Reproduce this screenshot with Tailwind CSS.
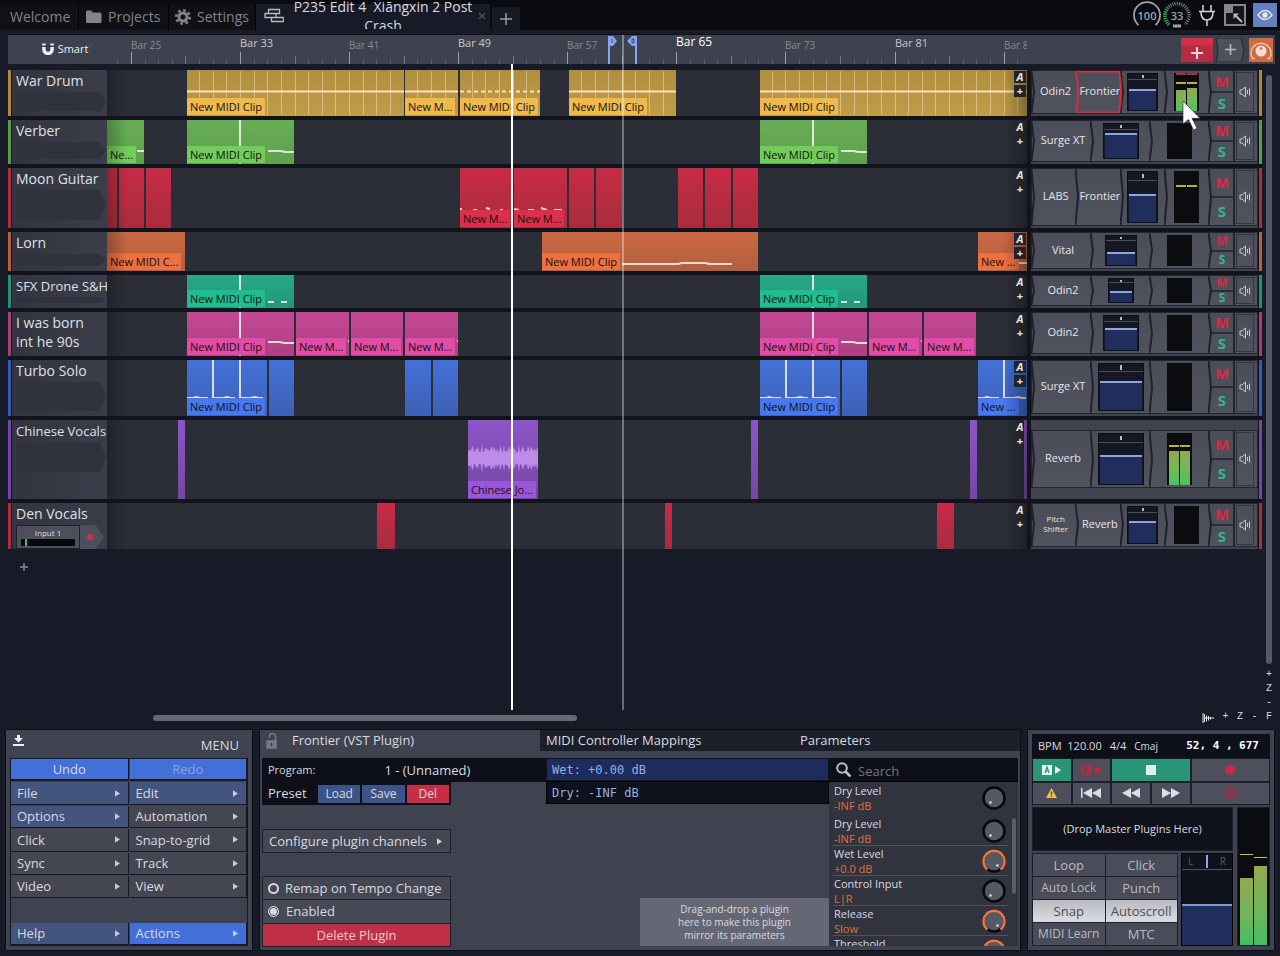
<!DOCTYPE html>
<html lang="en">
  <head>
    <meta charset="UTF-8" />
    <meta name="viewport" content="width=device-width, initial-scale=1.0" />
    <title>P235 Edit 4</title>
    <script src="https://cdn.jsdelivr.net/npm/@tailwindcss/browser@4"></script>
  </head>
  <body class="flex min-h-screen flex-col overflow-x-hidden bg-[#171b27] font-['Open_Sans','Noto_Sans',sans-serif] text-sm text-[#d9dae0]">
    <!-- tab bar -->
    <header class="flex h-[30px] items-stretch bg-[#090b11]">
      <nav class="flex items-stretch pt-1 text-[#82848a]">
        <a href="#" class="flex w-[79px] items-center border-r border-black bg-[#0f1117] pb-px pl-[10px]">Welcome</a>
        <a href="#" class="flex w-[90px] items-center gap-[6px] border-r border-black bg-[#0f1117] pb-px pl-[7px]">
          <svg class="h-4 w-4" viewBox="0 0 16 16" fill="currentColor"><path d="M0 3q0-1.500 1.500-1.500h3.500q1.500 0 1.500 2h7.500q1.500 0 1.500 1.500v7.500q0 1.500-1.500 1.500h-12.500Q0 14 0 12.500z" /></svg>
          Projects
        </a>
        <a href="#" class="flex w-[87px] items-center gap-[6px] border-r border-black bg-[#0f1117] pb-px pl-[6px]">
          <svg class="h-4 w-4" viewBox="0 0 16 16" fill="none" stroke="currentColor">
            <circle cx="8" cy="8" r="4" stroke-width="3" />
            <circle cx="8" cy="8" r="6.700" stroke-width="2.600" stroke-dasharray="2.630 2.630" />
          </svg>
          Settings
        </a>
        <a href="#" class="flex w-[234px] bg-[#171b27] pl-2 text-[#d9dae0]">
          <svg class="mt-1 h-4 w-5 shrink-0" viewBox="0 0 20 16" fill="none" stroke="#b9bac0" stroke-width="1.300">
            <path d="M4.500 1.500h11v4h-11zM1 5.500h11v4H1zM7.500 9.500h12v4h-12z" />
          </svg>
          <span class="-mt-[7px] h-[32px] flex-1 overflow-hidden pr-1 pl-2 text-center leading-[19px]">P235 Edit 4&nbsp; Xiāngxin 2 Post Crash</span>
          <svg class="mt-2 mr-1 h-2 w-2 shrink-0" viewBox="0 0 8 8" stroke="#4b4e58" stroke-width="1.500"><path d="M1 1l6 6M7 1L1 7" /></svg>
        </a>
      </nav>
      <button class="mt-[7px] ml-[2px] flex w-7 items-center justify-center bg-[#171a22]" aria-label="New tab">
        <svg class="h-3 w-3" viewBox="0 0 12 12" stroke="#9c9da3" stroke-width="1.500"><path d="M6 0v12M0 6h12" /></svg>
      </button>
      <div class="ml-auto flex items-center gap-[2px] pr-[3px] text-[11px] font-semibold text-[#a0a1a6]">
        <svg class="h-7 w-7" viewBox="0 0 28 28">
          <path d="M5.500 24A13 13 0 1 1 22.500 24" fill="none" stroke="#a0a1a6" stroke-width="1.800" />
          <text x="14" y="19" text-anchor="middle" fill="currentColor">100</text>
        </svg>
        <svg class="h-7 w-7" viewBox="0 0 28 28" fill="none">
          <path d="M6 23.500A12 12 0 1 1 22 23.500" stroke="#85868c" stroke-width="3.500" stroke-dasharray="1 1.200" />
          <path d="M6 23.500A12 12 0 0 1 4.500 7" stroke="#19b32d" stroke-width="3.500" stroke-dasharray="1 1.200" />
          <path d="M10 25h8" stroke="#a0a1a6" stroke-width="3" />
          <text x="14" y="19" text-anchor="middle" fill="currentColor">33</text>
        </svg>
        <svg class="ml-1 h-[22px] w-5" viewBox="0 0 20 22" fill="none" stroke="#d4d5da" stroke-width="1.500">
          <path d="M6 1v6M14 1v6M2 7.500h16M4 8q0 8 6 8t6-8M10 16v6" />
        </svg>
        <svg class="mx-[5px] h-[22px] w-[22px]" viewBox="0 0 22 22" fill="none" stroke="#85868c" stroke-width="2">
          <rect x="1" y="1" width="20" height="20" fill="#14161c" /><path d="M1 1h8v8H1z" fill="#85868c" stroke="none" /><path d="M12 12l6 6" stroke="#b9bac0" /><path d="M9.500 9.500h5.500l-5.500 5.500z" fill="#b9bac0" stroke="none" />
        </svg>
        <button class="flex h-6 w-6 items-center justify-center bg-[#6480c0]" aria-label="Show panels">
          <svg class="h-3 w-4" viewBox="0 0 16 12" fill="none" stroke="#e8eaf2" stroke-width="1.300"><path d="M1 6q7-9 14 0-7 9-14 0z" /><circle cx="8" cy="6" r="2" fill="#e8eaf2" /></svg>
        </button>
      </div>
    </header>

    <!-- arranger -->
    <main class="flex flex-1 flex-col pt-1 pl-2">
      <!-- ruler -->
      <div class="mr-[5px] flex h-[30px] border-t border-[#0e1119] bg-[#3e424e]">
        <button class="flex w-[99px] items-center justify-center gap-1 pr-px pb-px pl-4 text-[11px] text-[#eeeff2]">
          <svg class="h-3 w-3" viewBox="0 0 12 12" fill="none" stroke="#eeeff2" stroke-width="3.400"><path d="M1.900 4v2.500a4.100 4 0 0 0 8.200 0V4" /><path d="M.2 1.500h3.400M8.400 1.500h3.400" stroke-width="2" /></svg>
          Smart
        </button>
        <div id="ruler" class="relative flex-1 overflow-hidden"></div>
        <div class="flex w-[248px] items-center justify-end pr-[2px]">
          <button class="flex h-6 w-8 items-center justify-center border-t-[7px] border-[#d92c49] bg-[#b62d42]" aria-label="Add track">
            <svg class="h-3 w-3" viewBox="0 0 12 12" stroke="#f0d8dc" stroke-width="2"><path d="M6 0v12M0 6h12" /></svg>
          </button>
          <button class="relative mx-[2px] flex h-6 w-[32px] items-center justify-center pr-[2px]" aria-label="Add plugin">
            <svg class="absolute inset-0 h-6 w-8" viewBox="0 0 32 24"><path d="M1 0h25l3 12-3 12H1l2-12z" fill="#4d515c" stroke="#252833" /></svg>
            <svg class="relative h-[11px] w-[11px]" viewBox="0 0 12 12" stroke="#b4b6bc" stroke-width="1.800"><path d="M6 0v12M0 6h12" /></svg>
          </button>
          <button class="flex h-6 w-6 items-center justify-center bg-[#cf6b42]" aria-label="Controls">
            <svg class="h-[22px] w-[22px]" viewBox="0 0 22 22"><path d="M5 19.500H2.500A10 10 0 1 1 19.500 19.500H17" fill="none" stroke="#f1c6b2" stroke-width="1.400" /><circle cx="11" cy="12" r="5.500" fill="#f5ddd2" /><circle cx="11" cy="9.500" r="1.300" fill="#cf6b42" /></svg>
          </button>
        </div>
      </div>

      <div class="relative flex flex-1">
        <div class="flex flex-1 flex-col">
          <div id="tracks" class="mt-[6px] flex flex-col gap-1 bg-[#11141c]"></div>
          <button class="ml-2 flex h-9 w-4 items-center justify-center" aria-label="Add track">
            <svg class="h-2 w-2" viewBox="0 0 8 8" stroke="#85868e" stroke-width="1.500"><path d="M4 0v8M0 4h8" /></svg>
          </button>
        </div>
        <div class="flex w-[18px] flex-col items-center pt-[11px] pr-1 font-['Liberation_Mono',monospace] text-[10px] leading-[14px]">
          <div class="w-[6px] flex-1 rounded-full bg-[#565a66]"></div>
          <div class="mt-1 flex flex-col items-center text-[#d9dae0]">
            <button>+</button><button>Z</button><button>-</button>
          </div>
        </div>
        <!-- edit cursor and playhead -->
        <div class="pointer-events-none absolute -top-[29px] bottom-0 left-[614px] w-[2px] bg-white/35"></div>
        <div class="pointer-events-none absolute top-0 bottom-0 left-[503px] w-[2px] bg-white"></div>
        <!-- mouse pointer -->
        <svg class="pointer-events-none absolute top-[36px] right-[79px] h-8 w-5" viewBox="0 0 20 32"><path d="M2 1v23l5.500-4.500 5 10.500 3.500-1.700-5-10h8z" fill="#fff" stroke="#222" stroke-width=".6" /></svg>
      </div>

      <!-- horizontal scroll and zoom -->
      <div class="flex h-[19px] items-center pb-1 font-['Liberation_Mono',monospace] text-[10px]">
        <div class="ml-[145px] h-[6px] w-[424px] rounded-full bg-[#666974]"></div>
        <div class="ml-auto flex w-[78px] items-center justify-between pr-2">
          <svg class="h-[10px] w-3" viewBox="0 0 12 10" fill="none" stroke="#e4e5ea"><path d="M1 0v10M2.500 1v8M4.500 2.500v6M6.500 3v4.500M8.500 4v2.500M2 5h10" /></svg>
          <button>+</button><button>Z</button><button>-</button><button>F</button>
        </div>
      </div>
    </main>

    <!-- bottom panels -->
    <footer class="flex h-[227px] gap-[6px] px-[5px] pb-[5px]">
      <!-- menu -->
      <section class="w-[248px] border border-[#0c0e15] bg-[#3f434f] px-1">
        <div class="flex h-7 items-end justify-between pr-[9px] pb-[3px] pl-[3px]">
          <svg class="mb-[9px] h-[11px] w-[11px]" viewBox="0 0 11 11" fill="#eeeff2"><path d="M4 0h3v3h3L5.500 7.500 1 3h3zM0 9h11v2H0z" /></svg>
          <h2 class="text-[13px]">MENU</h2>
        </div>
        <div id="menu" class="grid h-[188px] grid-cols-2 grid-rows-8 gap-px border border-[#161922] bg-[#3f434f]"></div>
      </section>

      <!-- plugin -->
      <section class="flex min-w-0 flex-1 flex-col border border-[#0c0e15] bg-[#3f434f]">
        <div class="flex h-[21px] bg-[#1b1f2a] text-[13px]">
          <button class="flex w-[280px] items-center gap-[14px] bg-[#3f434f] pl-[6px] text-left">
            <svg class="h-4 w-3" viewBox="0 0 12 16" fill="none" stroke="#777a84" stroke-width="1.500"><path d="M3.500 5V3.500a3 3 0 0 1 6 0V8" /><path d="M1 8h9v7H1z" fill="#777a84" /><path d="M5.500 10v3" stroke="#33363f" /></svg>
            Frontier (VST Plugin)
          </button>
          <button class="w-[254px] pl-[6px] text-left">MIDI Controller Mappings</button>
          <button class="flex-1 pl-[6px] text-left">Parameters</button>
        </div>
        <div class="mt-[7px] flex flex-1 items-stretch overflow-hidden pr-[2px] pl-[2px]">
          <div class="flex w-[284px] flex-col">
            <div class="flex h-6 items-center bg-[#0d1018] pl-[6px] text-[11px]">
              Program:
              <span class="ml-[69px] text-[13px]">1 - (Unnamed)</span>
            </div>
            <div class="flex h-[23px] w-[189px] items-center gap-[2px] bg-[#0d1018] pr-[2px] pl-[6px] text-[12px]">
              <span class="w-[48px] text-[13px]">Preset</span>
              <button class="h-[18px] flex-1 bg-[#3c5488]">Load</button>
              <button class="h-[18px] flex-1 bg-[#3c5488]">Save</button>
              <button class="h-[18px] flex-1 bg-[#c52e45]">Del</button>
            </div>
            <button class="mt-6 flex h-6 w-[189px] items-center justify-between border border-[#1c202a] bg-[#444752] pr-2 pl-[6px] text-[13px]">
              Configure plugin channels
              <svg class="h-[7px] w-[5px]" viewBox="0 0 6 8" fill="#d0d1d7"><path d="M0 0l6 4-6 4z" /></svg>
            </button>
            <div class="mt-[23px] w-[189px] border border-[#1c202a] bg-[#444752] text-[13px]">
              <label class="flex h-[23px] items-center gap-[6px] border-b border-[#1c202a] pl-[5px]">
                <input type="checkbox" class="h-[11px] w-[11px] appearance-none rounded-full border-2 border-[#d9dae0] checked:bg-[#d9dae0] checked:shadow-[inset_0_0_0_1px_#3f434f]" />
                Remap on Tempo Change
              </label>
              <label class="flex h-6 items-center gap-[7px] border-b border-[#1c202a] bg-[#464a57] pl-[5px]">
                <input type="checkbox" checked class="h-[11px] w-[11px] appearance-none rounded-full border border-[#d9dae0] checked:bg-[#d9dae0] checked:shadow-[inset_0_0_0_1px_#3f434f]" />
                Enabled
              </label>
              <button class="block h-[22px] w-full bg-[#bf2f45] text-[#f3c9d0]">Delete Plugin</button>
            </div>
          </div>
          <div class="flex flex-1 flex-col font-['DejaVu_Sans_Mono',monospace] text-[12px] text-[#96aee8]">
            <button class="h-[23px] border border-[#10131d] bg-[#1d2c5b] pt-[2px] pl-[5px] text-left">Wet: +0.00 dB</button>
            <button class="h-[23px] border border-black bg-[#0f121c] pt-[2px] pl-[5px] text-left">Dry: -INF dB</button>
            <div class="mt-auto mb-1 flex h-12 w-[189px] flex-col justify-center self-end bg-[#656874] text-center font-['Open_Sans',sans-serif] text-[10px] leading-[13px] text-[#d9dae0]">
              <p>Drag-and-drop a plugin<br />here to make this plugin<br />mirror its parameters</p>
            </div>
          </div>
          <div class="mb-1 flex w-[189px] flex-col bg-[#31343f]">
            <label class="flex h-6 shrink-0 items-center gap-[7px] border-b border-black bg-[#0d1018] pl-[7px]">
              <svg class="h-[15px] w-[15px]" viewBox="0 0 15 15" fill="none" stroke="#c0c1c7" stroke-width="2"><circle cx="6" cy="6" r="4.800" /><path d="M9.500 9.500l5 5" stroke-width="2.600" /></svg>
              <input type="search" aria-label="Search" placeholder="Search" class="min-w-0 flex-1 bg-transparent pt-[3px] text-[13px] outline-none placeholder:text-[#74777f]" />
            </label>
            <div class="relative flex-1 overflow-hidden">
              <ul id="params" class="absolute inset-x-0 top-px"></ul>
              <div class="absolute top-[36px] right-[2px] h-[76px] w-1 rounded-full bg-[#5a5e69]"></div>
            </div>
          </div>
        </div>
      </section>

      <!-- transport -->
      <section class="flex w-[248px] flex-col gap-[2px] border border-[#0c0e15] bg-[#3f434f] p-1">
        <div class="flex h-6 items-center bg-[#0d1018] pl-[6px] text-[11px] whitespace-nowrap">
          <span>BPM&nbsp; 120.00</span>
          <span class="ml-2">4/4</span>
          <span class="ml-2 text-[10px]">Cmaj</span>
          <span class="mr-[11px] ml-auto font-['DejaVu_Sans_Mono',monospace] text-[11px] font-bold text-white">52, 4 , 677</span>
        </div>
        <div class="-mt-[2px] grid h-[47px] grid-cols-6 grid-rows-2 gap-[2px] border border-[#161922] bg-[#1c202a] *:flex *:items-center *:justify-center *:bg-[#4d505c]">
          <button class="bg-[#2a9576]!" aria-label="Automation read">
            <svg class="h-[10px] w-5" viewBox="0 0 20 10"><path d="M0 0h10v10H0zM13 1l6 4-6 4z" fill="#e3f3ee" /><path d="M3 8l2-6 2 6M3.500 6h3" fill="none" stroke="#2a9576" stroke-width="1.200" /></svg>
          </button>
          <button aria-label="Automation write">
            <svg class="h-[10px] w-5" viewBox="0 0 20 10"><path d="M0 0h10v10H0z" fill="#b22c42" /><circle cx="16.500" cy="5" r="3.500" fill="#b22c42" /><path d="M3 8l2-6 2 6M3.500 6h3" fill="none" stroke="#4d505c" stroke-width="1.200" /></svg>
          </button>
          <button class="col-span-2 bg-[#2a9576]!" aria-label="Stop"><span class="h-[10px] w-[10px] bg-[#dff0eb]"></span></button>
          <button class="col-span-2" aria-label="Record"><span class="h-[10px] w-[10px] rounded-full bg-[#c92d45]"></span></button>
          <button aria-label="Warning">
            <svg class="h-[10px] w-[11px]" viewBox="0 0 11 10"><path d="M5.500 0L11 10H0z" fill="#ecc14d" /><path d="M5.500 3.500v3M5.500 7.500v1.200" stroke="#4d4320" stroke-width="1.300" /></svg>
          </button>
          <button aria-label="To start">
            <svg class="h-[10px] w-5" viewBox="0 0 20 10" fill="#dddee4"><path d="M0 0h1.500v10H0zM11 0v10L2 5zM20 0v10l-9-5z" /></svg>
          </button>
          <button aria-label="Rewind"><svg class="h-[10px] w-[18px]" viewBox="0 0 18 10" fill="#dddee4"><path d="M9 0v10L0 5zM18 0v10L9 5z" /></svg></button>
          <button aria-label="Forward"><svg class="h-[10px] w-[18px]" viewBox="0 0 18 10" fill="#dddee4"><path d="M0 0v10l9-5zM9 0v10l9-5z" /></svg></button>
          <button class="col-span-2" aria-label="Punch record"><svg class="h-[13px] w-[13px]" viewBox="0 0 13 13" fill="none" stroke="#a92c42" stroke-width="2"><circle cx="6.500" cy="6.500" r="5.200" /><path d="M4 6l2 2.500L9.500 4" stroke-width="1.400" /></svg></button>
        </div>
        <div class="flex flex-1 gap-1">
          <div class="flex flex-1 flex-col gap-[2px]">
            <div class="flex h-11 items-center justify-center border border-[#1c202a] bg-[#0f121b] text-[11px]">(Drop Master Plugins Here)</div>
            <div class="flex flex-1 gap-[3px]">
              <div class="grid flex-1 grid-cols-2 gap-px border border-[#1c202a] bg-[#1c202a] text-[13px] *:bg-[#4a4d59] *:text-[#b9bbc2]">
                <button>Loop</button>
                <button>Click</button>
                <button class="text-[12px]">Auto Lock</button>
                <button>Punch</button>
                <button class="bg-linear-to-b! from-[#b9bac0] to-[#dcdde2] text-[#4d4f58]!">Snap</button>
                <button class="bg-linear-to-b! from-[#b9bac0] to-[#dcdde2] text-[#4d4f58]!">Autoscroll</button>
                <button class="text-[12px]">MIDI Learn</button>
                <button>MTC</button>
              </div>
              <div class="relative flex w-[52px] flex-col border border-black bg-[#10131d]">
                <div class="flex h-4 items-center justify-around border-b border-[#50535e] text-[10px] text-[#555963]">L<span class="h-[13px] w-[2px] bg-[#91a4e8]"></span>R</div>
                <div class="mt-[34px] flex-1 border-t-2 border-[#7f97d8] bg-[#1f2e5c]"></div>
                <input type="range" aria-label="Master volume" class="absolute inset-0 h-full w-full opacity-0" />
              </div>
            </div>
          </div>
          <div class="flex w-[33px] items-end gap-px border border-[#1c202a] bg-[#0b0c10] px-[2px]">
            <div class="flex h-[91px] flex-1 flex-col justify-end border-t border-[#c9c44e]"><div class="h-[67px] bg-linear-to-t from-[#3fbf63] to-[#93a84f]"></div></div>
            <div class="flex h-[88px] flex-1 flex-col justify-end border-t border-[#c9c44e]"><div class="h-[79px] bg-linear-to-t from-[#3fbf63] to-[#93a84f]"></div></div>
          </div>
        </div>
      </section>
    </footer>

    <script>
      const BAR = 13.636;
      // x of a bar line inside the lane
      const barX = bar => Math.round(133 + (bar - 33) * BAR);

      const colors = {
        yellow: { strip: 'bg-[#b08a36]', clip: 'bg-linear-to-b from-[#b18e3e] to-[#c09c49]', label: 'bg-[#efb94e]' },
        green: { strip: 'bg-[#5a9e49]', clip: 'bg-linear-to-b from-[#66ae54] to-[#5fa04e]', label: 'bg-[#72cc5b]' },
        red: { strip: 'bg-[#b02a40]', clip: 'bg-linear-to-b from-[#c92b45] to-[#a82c3c]', label: 'bg-[#dc2f4a]' },
        orange: { strip: 'bg-[#b8613a]', clip: 'bg-linear-to-b from-[#cb6841] to-[#b1603f]', label: 'bg-[#ec7040]' },
        teal: { strip: 'bg-[#1f9174]', clip: 'bg-linear-to-b from-[#27a988] to-[#219878]', label: 'bg-[#1fbd8f]' },
        pink: { strip: 'bg-[#a83d7c]', clip: 'bg-linear-to-b from-[#c64794] to-[#ab4182]', label: 'bg-[#e14ca6]' },
        blue: { strip: 'bg-[#355cb5]', clip: 'bg-linear-to-b from-[#4371da] to-[#3d61b3]', label: 'bg-[#4778f0]' },
        purple: { strip: 'bg-[#7546a3]', clip: 'bg-linear-to-b from-[#8d55c8] to-[#7647a3]', label: 'bg-[#9b55da]' },
      };

      // clips: [left, width, name, midi drawing]
      const MIDI = 'New MIDI Clip';
      const SHORT = 'New M...';
      const line = 'M53 0v60M0 32h2M81 31l13 0 4 1h10';
      const pinkLine = 'M53 0v60M0 31h2M81 30h12l4 1h12';
      const dots = 'M53 0v60M0 26h2M81 27h6M94 27h6';
      const tail = 'M0 31h1M52 29h1';
      const solo = 'M0 38h6l3-1 4 1h8M26 0v38h10l4-1 4 1h4M53 0v38h10l5-1 4 1h4';
      const tracks = [
        { name: 'War Drum', color: 'yellow', h: 'h-[46px]', plugins: ['Odin2', 'Frontier'], selected: 1, fader: 'w-[31px]', vol: 57, meter: [58, 64], peak: 75, clip: true, boxed: true,
          clips: [[80, 217, MIDI, 'bars'], [298, 53, SHORT, 'bars'], [353, 80, MIDI, 'dots'], [462, 107, MIDI, 'bars'], [653, 380, MIDI, 'bars']] },
        { name: 'Verber', color: 'green', h: 'h-[44px]', plugins: ['Surge XT'], fader: 'w-9', vol: 74,
          clips: [[0, 37, 'Ne...', 'M0 31h2M30 31h8'], [80, 107, MIDI, line], [653, 107, MIDI, line]] },
        { name: 'Moon Guitar', color: 'red', h: 'h-[60px]', plugins: ['LABS', 'Frontier'], fader: 'w-[31px]', vol: 57, meter: [0, 0], peak: 70,
          clips: [[0, 10], [12, 25], [39, 25], [353, 52, SHORT, 'M0 41h2M13 42h4M26 40l4 1M40 42h3'], [407, 53, SHORT, 'M0 41l5 1M14 42h6M27 40l6 2M40 42h8'], [462, 25], [489, 26], [571, 25], [598, 26], [626, 25]] },
        { name: 'Lorn', color: 'orange', h: 'h-[39px]', plugins: ['Vital'], fader: 'w-8', vol: 45, small: true, boxed: true,
          clips: [[0, 78, 'New MIDI C...', 'M0 32h2'], [435, 216, MIDI, 'M0 32h2M80 32h56l4-1h24l3 1h23'], [871, 140, 'New ...', 'M0 31h2M41 31h10']] },
        { name: 'SFX Drone S&amp;H', color: 'teal', h: 'h-[33px]', plugins: ['Odin2'], fader: 'w-[26px]', vol: 48, small: true, tight: true,
          clips: [[80, 107, MIDI, dots], [653, 107, MIDI, dots]] },
        { name: 'I was born<br />int he 90s', color: 'pink', h: 'h-[44px]', plugins: ['Odin2'], fader: 'w-9', vol: 65, noArrow: true,
          clips: [[80, 107, MIDI, pinkLine], [189, 53, SHORT, tail], [244, 52, SHORT, tail], [298, 53, SHORT, tail], [653, 107, MIDI, pinkLine], [762, 53, SHORT, tail], [817, 52, SHORT, tail]] },
        { name: 'Turbo Solo', color: 'blue', h: 'h-[56px]', plugins: ['Surge XT'], fader: 'w-[46px]', vol: 62, boxed: true,
          clips: [[80, 80, MIDI, solo], [162, 25], [298, 26], [326, 25], [653, 80, MIDI, solo], [735, 25], [871, 140, 'New ...', solo]] },
        { name: 'Chinese Vocals', color: 'purple', h: 'h-[79px]', plugins: ['Reverb'], fader: 'w-[46px]', vol: 59, meter: [66, 66], peak: 74, inset: true, tight: true,
          clips: [[71, 7], [361, 70, 'Chinese Jo...', 'wave'], [644, 7], [863, 7], [917, 7]] },
        { name: 'Den Vocals', color: 'red', h: 'h-[46px]', plugins: ['Pitch<br />Shifter', 'Reverb'], fader: 'w-[31px]', vol: 60, input: 'Input 1',
          clips: [[270, 18], [558, 7], [830, 17]] },
      ];

      function drawing(kind, left, width) {
        if (kind === 'bars' || kind === 'dots') {
          let stripes = '';
          for (let b = 24; b < 105; b++) {
            const x = barX(b) - left;
            if (x > 2 && x < width - 2) stripes += `M${x}.5 1v44`;
          }
          return `<svg class="absolute inset-0 h-full w-full" fill="none" stroke="#f3e3bd">
            <path d="${stripes}" opacity=".5" />
            <path d="M0 21.500H${width}" stroke="#f9e6ba" stroke-width="2" ${kind === 'dots' ? 'stroke-dasharray="4 3"' : ''} /></svg>`;
        }
        if (kind === 'wave') {
          let top = '', bottom = '';
          for (let x = 0; x <= 70; x++) {
            const a = 5 + Math.abs(Math.sin(x * 1.7) * 4 + Math.sin(x * 0.33) * 4 + Math.cos(x * 2.9) * 2);
            top += `L${x} ${Math.round(38 - a)}`;
            bottom = `L${x} ${Math.round(38 + a)}` + bottom;
          }
          return `<svg class="absolute inset-0 h-full w-full"><path d="M0 38${top}${bottom}z" fill="#bd8be8" /></svg>`;
        }
        return `<svg class="absolute inset-0 h-full w-full" fill="none" stroke="#f4f1ec" stroke-width="2"><path d="${kind}" opacity=".85" /></svg>`;
      }

      function clip([left, width, name, kind], c) {
        return `<div class="absolute inset-y-0 overflow-hidden ${c.clip}" style="left:${left}px;width:${width}px">
          ${kind ? drawing(kind, left, width) : ''}
          ${name ? `<span class="absolute bottom-px left-0 h-[17px] px-[3px] text-[11px] leading-[17px] whitespace-nowrap text-[#14120c] ${c.label}">${name}</span>` : ''}
        </div>`;
      }

      const chevron = `<svg class="absolute inset-y-0 -left-px h-full w-1" viewBox="0 0 4 100" preserveAspectRatio="none" fill="none"><path d="M.5 0L3 50 .5 100" stroke="#1f222b" stroke-width="2" vector-effect="non-scaling-stroke" /></svg>`;
      const outline = `<svg class="absolute inset-y-0 -left-px z-10 h-full w-[47px]" viewBox="0 0 47 100" preserveAspectRatio="none" fill="none"><path d="M1 1h43q4 49 0 98H1q4-49 0-98z" stroke="#dc2c42" stroke-width="2" vector-effect="non-scaling-stroke" /></svg>`;

      function meter(t) {
        if (!t.meter) return '<div class="w-[25px] bg-[#0b0c10]"></div>';
        return `<div class="flex w-[25px] gap-px bg-[#0b0c10] px-[2px]">${t.meter.map(level => `
          <div class="relative flex-1 ${t.clip ? 'border-t-2 border-[#b9273c]' : ''}">
            <div class="absolute inset-x-0 bottom-0 bg-linear-to-t from-[#42c560] to-[#93a84f]" style="height:${level}%"></div>
            <div class="absolute inset-x-0 h-[2px] bg-[#bfae3c]" style="bottom:${t.peak}%"></div>
          </div>`).join('')}</div>`;
      }

      function chain(t) {
        const font = t.small ? 'text-[12px]' : 'text-[15px]';
        return `<div class="flex flex-1 border border-[#23262f] bg-linear-to-b from-[#4b4e59] to-[#50535e] ${t.inset ? 'mt-[10px] mb-[11px]' : 'mb-[2px]'}">
          <div class="grid flex-1 auto-cols-fr grid-flow-col">
            ${t.plugins.map((p, i) => `<button class="relative min-w-0 pb-[2px] pl-[3px] text-[11px] text-[#e4e5ea] ${p.includes('<br') ? 'text-[8px]! leading-[10px]' : ''}">${i === t.selected ? outline : chevron}${p}</button>`).join('')}
            <div class="relative flex min-w-0 justify-center py-[2px]">${chevron}
              <div class="relative flex flex-col border border-[#0d0f16] bg-[#151823] ${t.fader}">
                <div class="flex h-[18%] shrink-0 items-center justify-center border-b border-[#4b4e59]"><span class="h-3/5 w-[2px] bg-[#b5b8d8]"></span></div>
                <div class="absolute inset-x-px bottom-0 border-t-2 border-[#8fa5dc] bg-[#1f2e5c]" style="height:${t.vol}%"></div>
                <input type="range" aria-label="Volume" class="absolute inset-0 h-full w-full opacity-0" />
              </div>
            </div>
            <div class="relative flex min-w-0 justify-center py-[2px]">${chevron}${meter(t)}</div>
          </div>
          <div class="relative flex w-[26px] flex-col border-r-2 border-[#23262f] pl-[2px] font-bold ${font}">${chevron}
            <button class="min-h-0 flex-1 border-b-2 border-[#2a2d37] leading-none text-[#d42b45]">M</button>
            <button class="min-h-0 flex-1 leading-none text-[#2fb795]">S</button>
          </div>
          <button class="m-px mr-[3px] flex w-[18px] items-center justify-center border border-[#343741]" aria-label="Monitor">
            <svg class="h-3 w-3" viewBox="0 0 12 12" fill="none" stroke="#c9cad0"><path d="M1 4h2l3.500-3v10L3 8H1zM8.500 4v4M10.500 2.500v7" /></svg>
          </button>
        </div>`;
      }

      function head(t) {
        if (t.input) {
          return `<div class="flex h-6 text-center text-[8px]">
            <button class="flex w-[64px] flex-col border border-[#1f222b] bg-[#4d505c] px-1 pb-[2px] leading-[13px]"><span class="w-full">${t.input}</span><span class="block h-2 w-full bg-[#07080b] pl-1"><span class="block h-full w-[2px] bg-[#3fbf63]"></span></span></button>
            <button class="flex w-6 items-center bg-[#4d505c] pl-[7px] [clip-path:polygon(0_0,65%_0,100%_50%,65%_100%,0_100%)]" aria-label="Arm"><span class="h-[6px] w-[6px] rounded-full bg-[#d92c45]"></span></button>
          </div>`;
        }
        return t.noArrow ? '' : '<div class="mb-[5px] max-h-[30px] flex-1 bg-[#30333d] [clip-path:polygon(0_0,93%_0,100%_50%,93%_100%,0_100%)]"></div>';
      }

      document.getElementById('tracks').innerHTML = tracks.map(t => {
        const c = colors[t.color];
        const box = t.boxed ? 'bg-[#22242c]' : '';
        return `<div class="flex ${t.h}">
          <div class="w-1 border-r border-[#11141c] ${c.strip}"></div>
          <div class="flex w-[95px] flex-col overflow-hidden bg-linear-to-r from-[#32353f] to-[#3b3e4a] pr-px pl-1">
            <h3 class="whitespace-nowrap text-[#dfe0e5] ${t.tight ? 'text-[13px]' : 'text-[14px]'} ${t.noArrow ? 'leading-[19px] pt-px' : 'leading-[22px]'}">${t.name}</h3>
            ${head(t)}
          </div>
          <div class="relative flex-1 overflow-hidden bg-[#2c2e37]">
            ${t.clips.map(k => clip(k, c)).join('')}
            <div class="pointer-events-none absolute inset-y-0 left-0 w-5 bg-linear-to-r from-black/25 to-transparent"></div>
            <div class="pointer-events-none absolute inset-y-0 right-0 w-6 bg-linear-to-l from-black/30 to-transparent"></div>
            <div class="absolute top-px right-px flex flex-col gap-[2px] text-[11px] leading-3 font-bold text-[#e4e5ea]">
              <button class="h-3 w-3 italic ${box}">A</button>
              <button class="h-3 w-3 ${box}">+</button>
            </div>
          </div>
          <div class="ml-1 flex w-[227px] bg-[#40434e]">${chain(t)}</div>
          <div class="w-1 border-l border-[#11141c] ${c.strip}"></div>
        </div>`;
      }).join('');

      // ruler ticks and bar names
      let ticks = '';
      for (let b = 24; b < 180; b++) {
        const size = b % 8 === 1 ? 'h-3 bg-[#9a9da6]' : b % 4 === 1 ? 'h-2 bg-[#777a84]' : 'h-1 bg-[#5d616c]';
        ticks += `<div class="absolute bottom-0 w-px ${size}" style="left:${barX(b)}px"></div>`;
        if (b % 8 === 1) {
          const text = b % 32 === 1 && b > 33 ? '-top-px text-[12px] text-white' : b % 16 === 1 ? 'top-0 text-[11px] text-[#c6c8cf]' : 'top-[2px] text-[10px] text-[#868993]';
          ticks += `<span class="absolute leading-4 whitespace-nowrap ${text}" style="left:${barX(b)}px">Bar ${b}</span>`;
        }
      }
      ticks += `<svg class="absolute top-px left-[501px] h-7 w-8" viewBox="0 0 32 28"><path d="M0 0h5l4 5-4 5H2v18H0z" fill="#86a5ee" /><path d="M29 0h-5l-5 5 5 5h3v18h2z" fill="#86a5ee" /><path d="M4 3v4M24 3h2v4h-2z" fill="none" stroke="#3b4c80" /></svg>`;
      document.getElementById('ruler').innerHTML = ticks;

      // menu
      const arrow = '<svg class="h-[7px] w-[5px]" viewBox="0 0 6 8" fill="#c3cbe0"><path d="M0 0l6 4-6 4z" /></svg>';
      const plain = 'bg-[#444752]';
      const blue = 'bg-[#43547f]';
      const bright = 'bg-[#4270d8]';
      const menu = [
        ['File', blue], ['Edit', blue], ['Options', blue], ['Automation', plain], ['Click', plain], ['Snap-to-grid', plain],
        ['Sync', plain], ['Track', plain], ['Video', plain], ['View', plain], null, null, ['Help', blue], ['Actions', bright],
      ];
      document.getElementById('menu').innerHTML = `
        <button class="border-r border-b-2 border-[#161922] text-[13px] ${bright}">Undo</button>
        <button class="border-r border-b-2 border-[#161922] text-[13px] text-[#8ba3e0] ${bright}">Redo</button>` +
        menu.map(m => m
          ? `<button class="flex items-center justify-between border-r border-b border-[#161922] pr-2 pl-[6px] text-[13px] ${m[1]}">${m[0]}${arrow}</button>`
          : '<span></span>').join('');

      // automatable parameters
      const params = [['Dry Level', '-INF dB'], ['Dry Level', '-INF dB'], ['Wet Level', '+0.0 dB', 1], ['Control Input', 'L|R'], ['Release', 'Slow', 1], ['Threshold', '&nbsp;', 1]];
      document.getElementById('params').innerHTML = params.map(([name, value, on], i) => `
        <li class="ml-1 flex h-[30px] items-center justify-between border-b border-[#50535e] pr-3 pl-px text-[11px] leading-[15px] ${i === 0 ? 'mb-[3px] border-transparent' : 'mr-[10px] pr-[2px]!'}">
          <span>${name}<br /><span class="text-[#e2703f]">${value}</span></span>
          <svg class="h-6 w-6" viewBox="0 0 24 24"><circle cx="12" cy="12" r="10.500" fill="#555963" stroke="#07080b" stroke-width="2.500" />
            ${on ? '<path d="M5.500 20.500A10.500 10.500 0 1 1 18.500 20.500" fill="none" stroke="#ee7441" stroke-width="2.500" /><circle cx="15.500" cy="16.500" r="1.200" fill="#e4e5ea" />' : '<circle cx="8.500" cy="16.500" r="1.200" fill="#e4e5ea" />'}
          </svg>
        </li>`).join('');
    </script>
  </body>
</html>
